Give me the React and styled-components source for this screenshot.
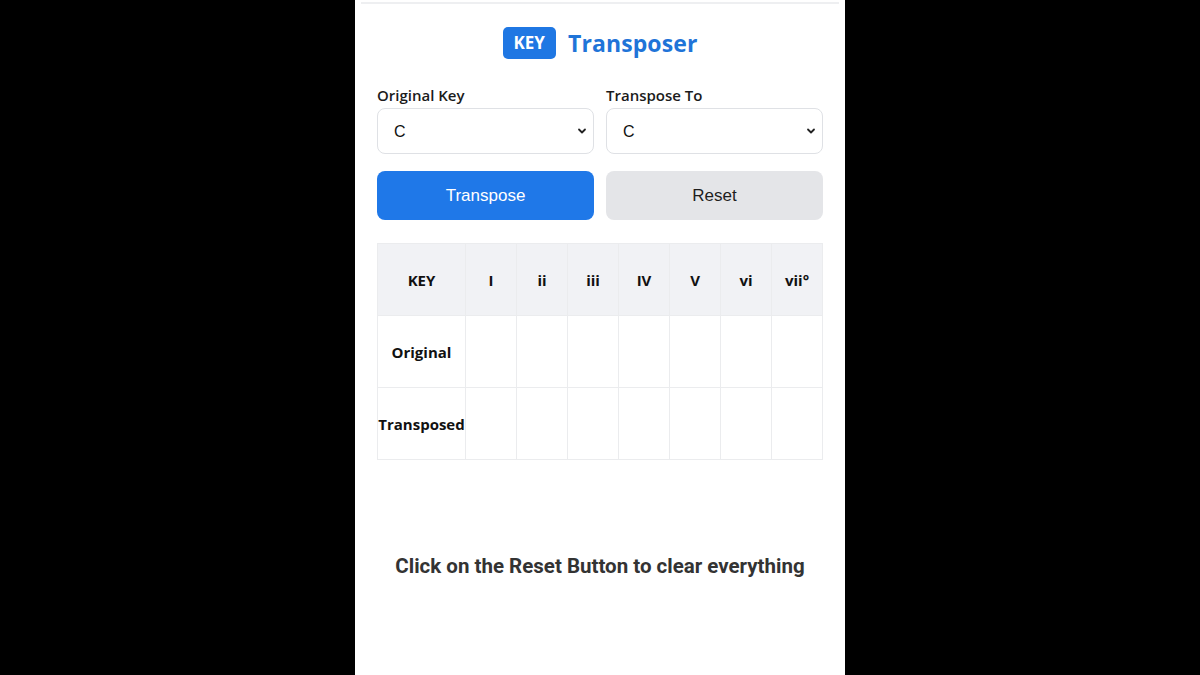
import { useState } from "react";
import styled, { createGlobalStyle } from "styled-components";

const GlobalStyle = createGlobalStyle`
  html, body {
    margin: 0;
    padding: 0;
    background: #000;
  }
  body {
    font-family: "Noto Sans", "Open Sans", sans-serif;
  }
`;

const Stage = styled.div`
  width: 1200px;
  height: 675px;
  display: flex;
  justify-content: center;
  background: #000;
`;

const Panel = styled.main`
  width: 490px;
  height: 675px;
  background: #fff;
  box-sizing: border-box;
  padding: 0 22px;
  display: flex;
  flex-direction: column;
`;

const TopRule = styled.div`
  height: 2px;
  margin: 2px -16px 0;
  background: #eeeff1;
`;

const Header = styled.header`
  display: flex;
  justify-content: center;
  align-items: center;
  gap: 12px;
  margin-top: 23px;
  height: 32px;
`;

const Badge = styled.span`
  background: #1f77e3;
  color: #fff;
  font-family: "Open Sans", sans-serif;
  font-weight: 700;
  font-size: 17px;
  border-radius: 5px;
  padding: 0 11px;
  height: 32px;
  line-height: 32px;
`;

const Title = styled.h1`
  margin: 0;
  color: #1f74d8;
  font-family: "Open Sans", sans-serif;
  font-weight: 700;
  font-size: 23px;
  letter-spacing: 0.1px;
`;

const Row = styled.div`
  display: grid;
  grid-template-columns: 1fr 1fr;
  gap: 12px;
  margin-top: ${(p) => p.$top}px;
`;

const Field = styled.label`
  display: flex;
  flex-direction: column;
  gap: 3px;
`;

const Label = styled.span`
  font-family: "Open Sans", sans-serif;
  font-weight: 600;
  font-size: 15px;
  color: #1b1b1b;
  line-height: 20px;
`;

const SelectWrap = styled.div`
  position: relative;
  height: 46px;
  border: 1px solid #dfe1e5;
  border-radius: 8px;
  box-sizing: border-box;
  background: #fff;
`;

const Select = styled.select`
  appearance: none;
  width: 100%;
  height: 100%;
  border: none;
  background: transparent;
  font-family: "Liberation Sans", Arial, sans-serif;
  font-size: 16px;
  color: #111;
  padding: 0 16px;
  outline: none;
`;

const Chevron = styled.svg`
  position: absolute;
  right: 3px;
  top: 50%;
  transform: translateY(-50%);
  pointer-events: none;
`;

const Button = styled.button`
  height: 49px;
  border: none;
  border-radius: 8px;
  font-family: "Liberation Sans", Arial, sans-serif;
  font-size: 17px;
  cursor: pointer;
  background: ${(p) => (p.$primary ? "#1f78e8" : "#e4e5e8")};
  color: ${(p) => (p.$primary ? "#fff" : "#1e1e1e")};
`;

const Table = styled.table`
  margin-top: 23px;
  width: 100%;
  border-collapse: collapse;
  table-layout: fixed;
  font-family: "Open Sans", sans-serif;
  font-size: 15px;
  color: #111;

  th, td {
    border: 1px solid #ebecee;
    height: 71px;
    padding: 0;
    text-align: center;
    font-weight: 700;
  }

  thead th {
    background: #f1f2f5;
  }

  col.key {
    width: 88px;
  }
`;

const Note = styled.p`
  margin: 94px 0 0;
  text-align: center;
  font-family: Roboto, sans-serif;
  font-weight: 700;
  font-size: 20.5px;
  color: #333;
`;

const KEYS = ["C", "C#", "D", "D#", "E", "F", "F#", "G", "G#", "A", "A#", "B"];
const DEGREES = ["I", "ii", "iii", "IV", "V", "vi", "vii°"];

const KeySelect = ({ label, value, onChange }) => (
  <Field>
    <Label>{label}</Label>
    <SelectWrap>
      <Select value={value} onChange={(e) => onChange(e.target.value)}>
        {KEYS.map((k) => (
          <option key={k}>{k}</option>
        ))}
      </Select>
      <Chevron width="16" height="16" viewBox="0 0 16 16">
        <path d="M5 6.5 8 9.5l3-3" fill="none" stroke="#222" strokeWidth="1.8" strokeLinecap="round" strokeLinejoin="round" />
      </Chevron>
    </SelectWrap>
  </Field>
);

const App = () => {
  const [from, setFrom] = useState("C");
  const [to, setTo] = useState("C");

  return (
    <Stage>
      <GlobalStyle />
      <Panel>
        <TopRule />
        <Header>
          <Badge>KEY</Badge>
          <Title>Transposer</Title>
        </Header>
        <Row $top={26}>
          <KeySelect label="Original Key" value={from} onChange={setFrom} />
          <KeySelect label="Transpose To" value={to} onChange={setTo} />
        </Row>
        <Row $top={17}>
          <Button $primary>Transpose</Button>
          <Button
            onClick={() => {
              setFrom("C");
              setTo("C");
            }}
          >
            Reset
          </Button>
        </Row>
        <Table>
          <colgroup>
            <col className="key" />
            {DEGREES.map((d) => (
              <col key={d} />
            ))}
          </colgroup>
          <thead>
            <tr>
              <th>KEY</th>
              {DEGREES.map((d) => (
                <th key={d}>{d}</th>
              ))}
            </tr>
          </thead>
          <tbody>
            {["Original", "Transposed"].map((r) => (
              <tr key={r}>
                <td>{r}</td>
                {DEGREES.map((d) => (
                  <td key={d} />
                ))}
              </tr>
            ))}
          </tbody>
        </Table>
        <Note>Click on the Reset Button to clear everything</Note>
      </Panel>
    </Stage>
  );
};

export default App;
